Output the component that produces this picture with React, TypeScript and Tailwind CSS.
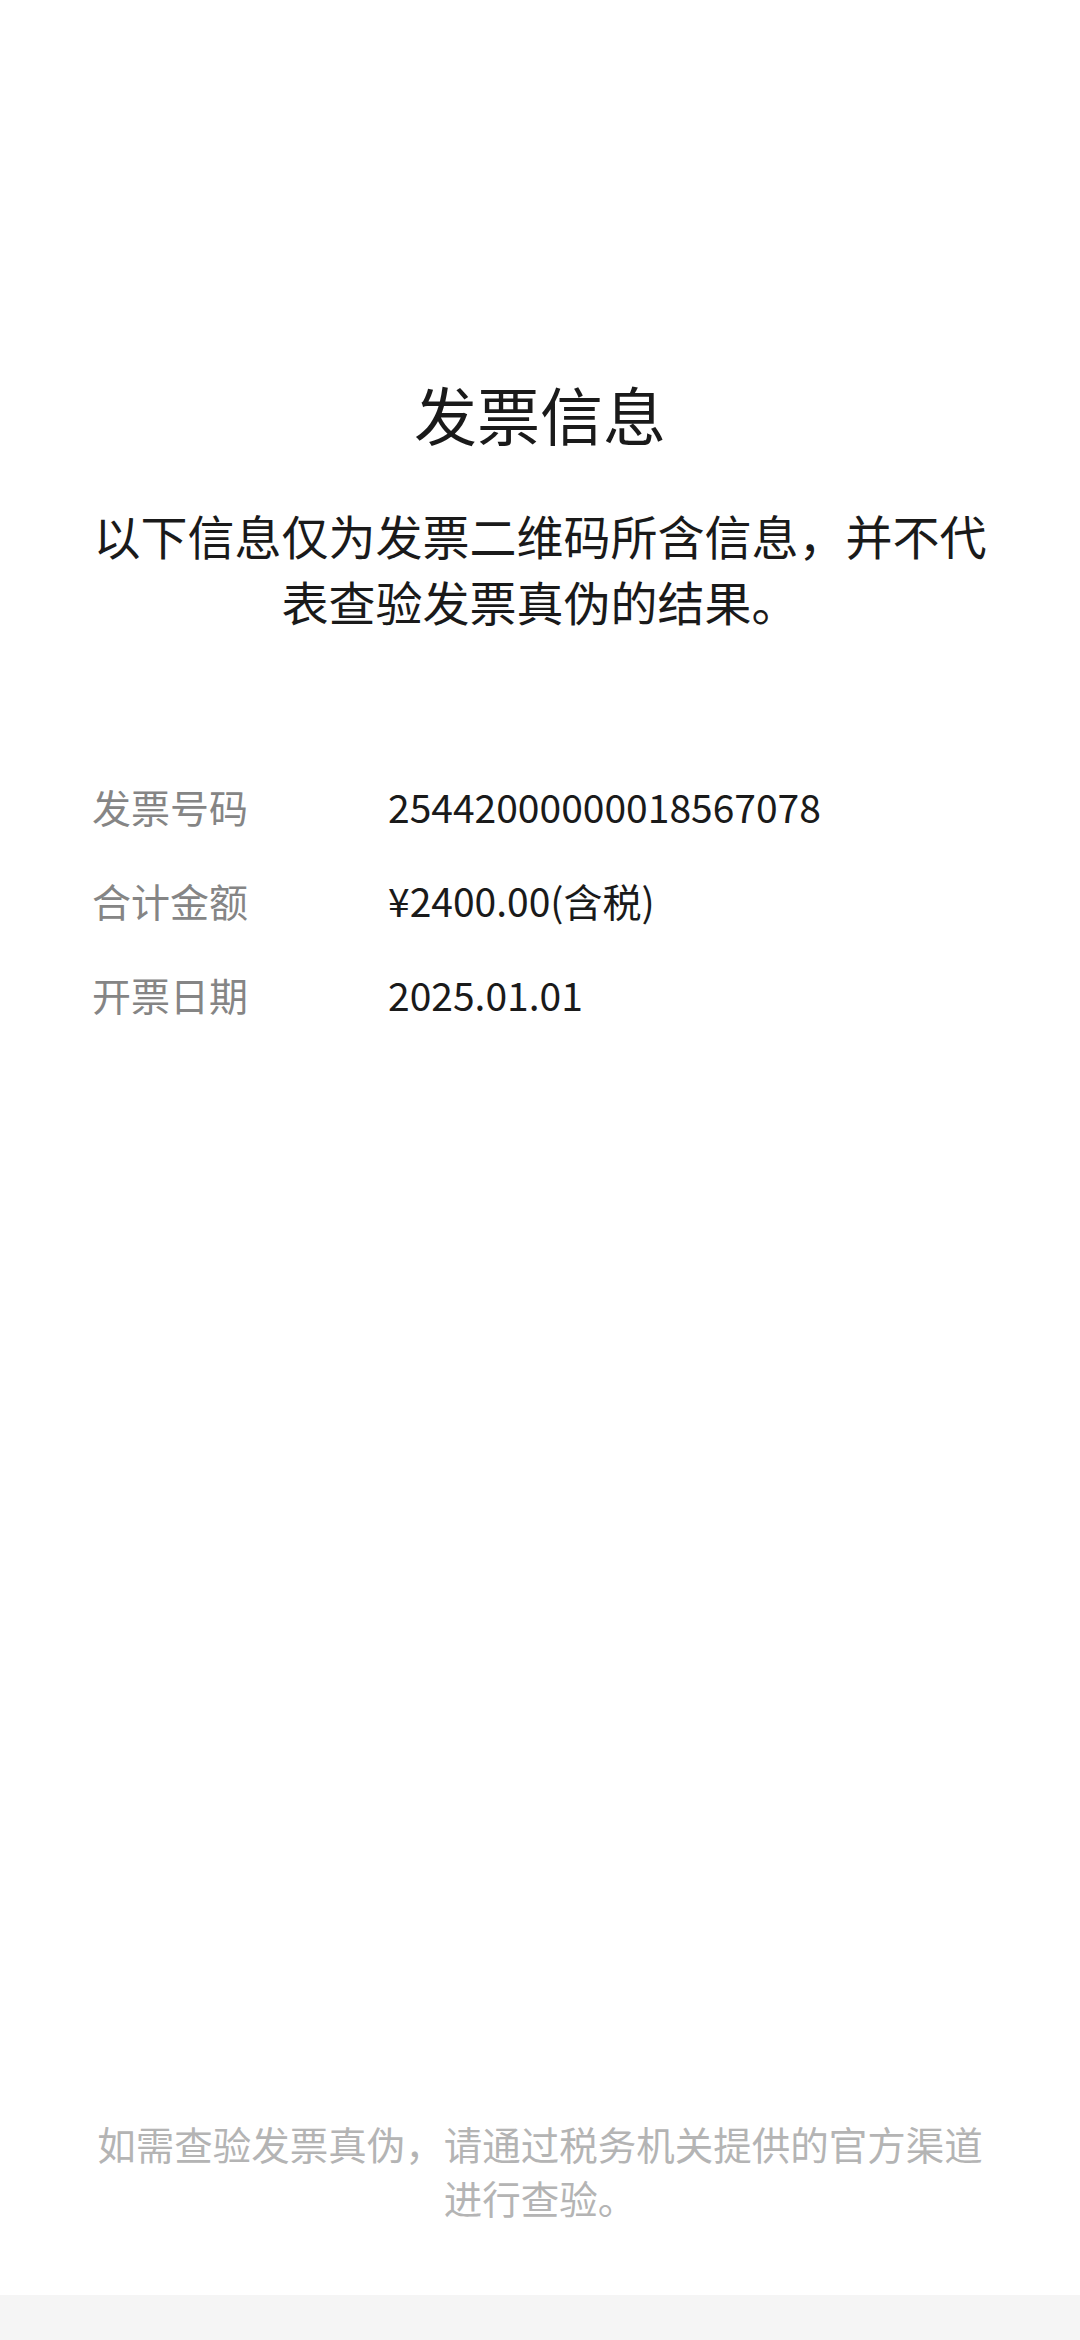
import React from 'react'

const font = { fontFamily: '"Noto Sans CJK SC", "Noto Sans", sans-serif' }

interface InfoRow {
    label: string;
    value: string;
}

const rows: InfoRow[] = [
    { label: "发票号码", value: "25442000000018567078" },
    { label: "合计金额", value: "¥2400.00(含税)" },
    { label: "开票日期", value: "2025.01.01" },
]

const App: React.FC = () => {
    return (
        <div
            className="flex flex-col h-[2340px] w-[1080px] bg-white font-['Noto_Sans_CJK_SC','Noto_Sans',sans-serif]"
            style={font}
        >
            {/* Header */}
            <div className="pt-[369px] px-[90px] text-center">
                <h1 className="text-[63px] leading-[88px] text-[#1a1a1a] font-normal">发票信息</h1>
                <p className="mt-[45px] text-[47px] leading-[66px] text-[#1a1a1a]">
                    以下信息仅为发票二维码所含信息，并不代表查验发票真伪的结果。
                </p>
            </div>

            {/* Info rows */}
            <div className="mt-[125px] pl-[92px] flex flex-col">
                {rows.map((row) => (
                    <div key={row.label} className="flex items-center h-[94px] text-[39px]">
                        <span className="w-[296px] text-[#858585]">{row.label}</span>
                        <span className="text-[#1a1a1a]">{row.value}</span>
                    </div>
                ))}
            </div>

            <div className="flex-1" />

            {/* Footer note */}
            <p className="px-[90px] pb-[71px] text-center text-[38.5px] leading-[54px] text-[#b4b4b4]">
                如需查验发票真伪，请通过税务机关提供的官方渠道进行查验。
            </p>
            <div className="h-[45px] bg-[#f5f5f5]" />
        </div>
    )
}

export default App
